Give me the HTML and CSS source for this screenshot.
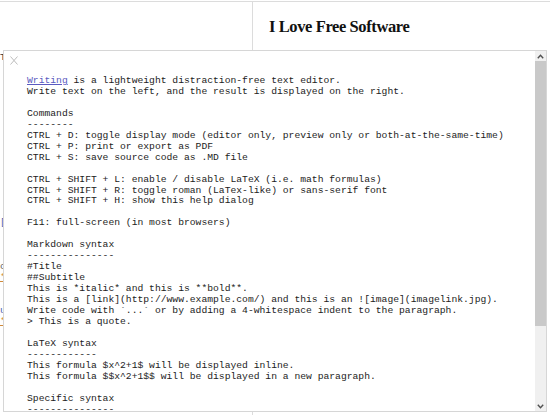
FILE: index.html
```html
<!DOCTYPE html>
<html lang="en">
<head>
    <meta charset="UTF-8">
    <meta name="viewport" content="width=device-width, initial-scale=1.0">
    <title>Writing</title>
    <link rel="stylesheet" href="styles.css">
</head>
<body>

<div class="app">
    <div class="editor">
<pre class="source"><span class="hl-head">T</span>














<span class="hl-link">[</span>



<span class="hl-code">c</span>
<span class="hl-em">*</span>


<span class="hl-link">u</span>
<span class="hl-em">*</span></pre>
    </div>
    <div class="preview">
        <h1>I Love Free Software</h1>
        <p>Free software respects the freedom of users.</p>
    </div>
</div>

<div class="help">
    <span class="close">
        <svg width="8" height="9" viewBox="0 0 8 9"><path d="M0.5 0.5 L7.5 8.5 M7.5 0.5 L0.5 8.5" stroke="#bdbdbd" stroke-width="1" fill="none"/></svg>
    </span>
    <div class="help-body">
<pre><a href="#">Writing</a> is a lightweight distraction-free text editor.
Write text on the left, and the result is displayed on the right.

Commands
--------
CTRL + D: toggle display mode (editor only, preview only or both-at-the-same-time)
CTRL + P: print or export as PDF
CTRL + S: save source code as .MD file

CTRL + SHIFT + L: enable / disable LaTeX (i.e. math formulas)
CTRL + SHIFT + R: toggle roman (LaTex-like) or sans-serif font
CTRL + SHIFT + H: show this help dialog

F11: full-screen (in most browsers)

Markdown syntax
---------------
#Title
##Subtitle
This is *italic* and this is **bold**.
This is a [link](http://www.example.com/) and this is an ![image](imagelink.jpg).
Write code with `...` or by adding a 4-whitespace indent to the paragraph.
&gt; This is a quote.

LaTeX syntax
------------
This formula $x^2+1$ will be displayed inline.
This formula $$x^2+1$$ will be displayed in a new paragraph.

Specific syntax
---------------
</pre>
    </div>
    <div class="scrollbar">
        <span class="arrow">
            <svg width="7" height="5" viewBox="0 0 7 5"><path d="M0.8 4.2 L3.5 1.3 L6.2 4.2" stroke="#505050" stroke-width="1.4" fill="none"/></svg>
        </span>
        <div class="track"><div class="thumb"></div></div>
        <span class="arrow">
            <svg width="7" height="5" viewBox="0 0 7 5"><path d="M0.8 0.8 L3.5 3.7 L6.2 0.8" stroke="#505050" stroke-width="1.4" fill="none"/></svg>
        </span>
    </div>
</div>

</body>
</html>
```

FILE: styles.css
```css
body {
    margin: 0;
    padding-top: 1px;
    font-family: 'Liberation Serif', 'Times New Roman', serif;
    background-color: #ffffff;
    color: #111;
    overflow: hidden;
}
.app {
    display: flex;
    height: 413px;
    border-top: 1px solid #dcdcdc;
}
.editor {
    width: 252px;
    border-right: 1px solid #dcdcdc;
    overflow: hidden;
}
.source {
    margin: 0;
    padding-top: 50px;
    font-family: 'Liberation Mono', 'Courier New', monospace;
    font-size: 9.7px;
    line-height: 11px;
    color: #333;
}
.hl-head {
    color: #333;
}
.hl-link {
    color: #4a5fb0;
}
.hl-code {
    color: #666;
}
.hl-em {
    color: #d08a3a;
    text-decoration: underline;
}
.preview {
    flex: 1;
    padding: 15px 16px 0 16px;
    overflow: hidden;
}
h1 {
    margin: 0;
    font-size: 16.5px;
    letter-spacing: -0.4px;
    line-height: 20px;
    font-weight: bold;
}
.preview p {
    margin: 11px 0 0 14px;
    font-size: 13px;
    line-height: 16px;
    letter-spacing: 0.6px;
    color: #555;
}

/* help dialog over the editor */
.help {
    position: absolute;
    left: 3px;
    top: 50px;
    width: 544px;
    height: 362px;
    box-sizing: border-box;
    border: 1px solid #d6d6d6;
    background-color: #ffffff;
    display: flex;
}
.close {
    position: absolute;
    left: 6px;
    top: 5px;
    line-height: 0;
}
.help-body {
    flex: 1;
    overflow: hidden;
    padding: 25px 0 0 23px;
}
.help-body pre {
    margin: 0;
    font-family: 'Liberation Mono', 'Courier New', monospace;
    font-size: 9.7px;
    line-height: 10.95px;
    color: #1c1c1c;
}
.help-body a {
    color: #5a5ac0;
}
.scrollbar {
    width: 11px;
    background-color: #f0f0f0;
    display: flex;
    flex-direction: column;
}
.arrow {
    height: 10px;
    display: flex;
    align-items: center;
    justify-content: center;
}
.track {
    flex: 1;
}
.thumb {
    height: 265px;
    background-color: #c9c9c9;
}
```
